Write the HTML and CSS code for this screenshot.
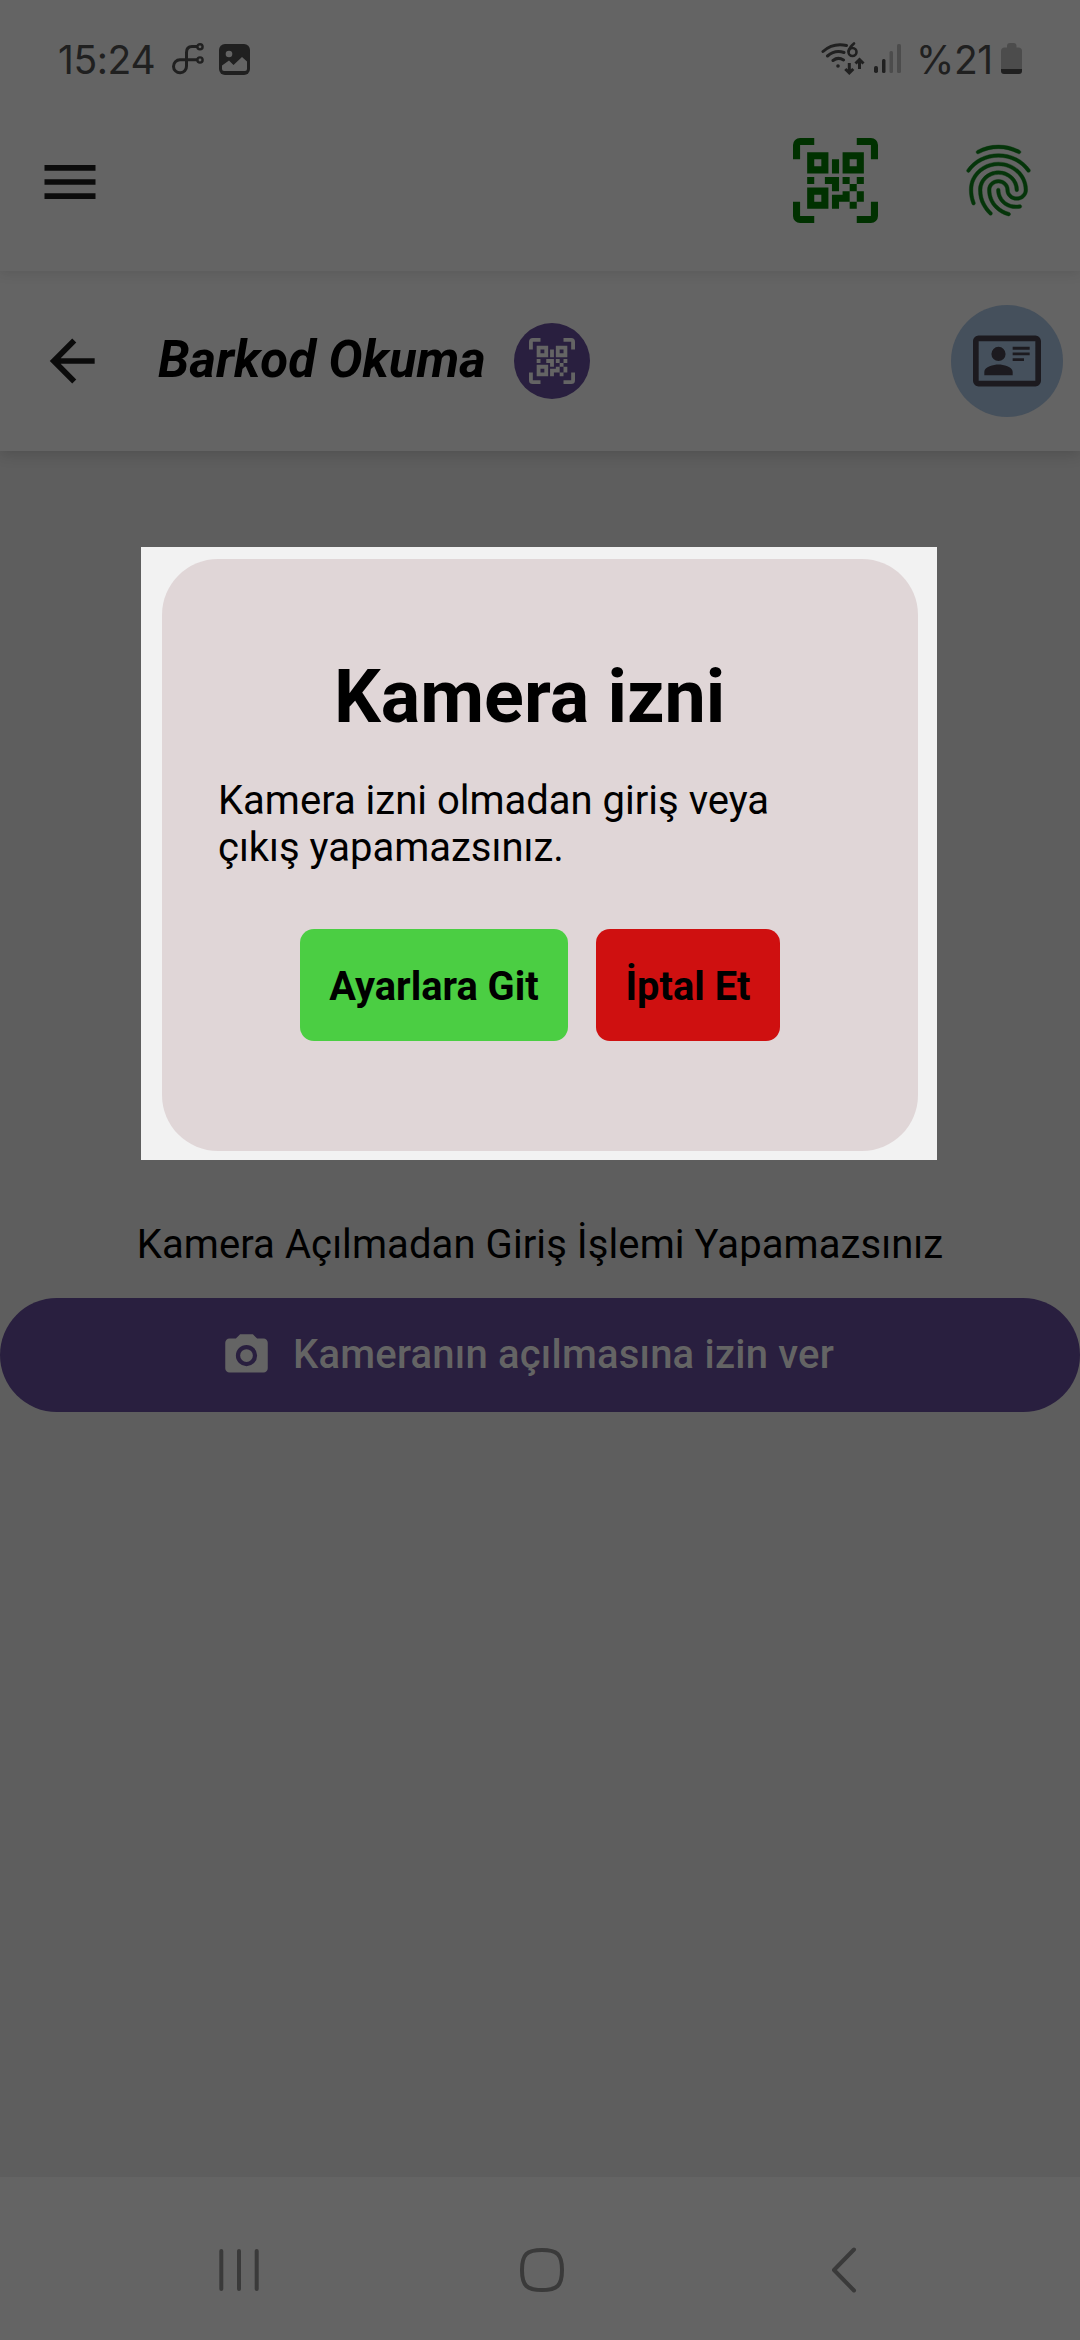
FILE: index.html
```html
<!DOCTYPE html>
<html lang="tr">
<head>
<meta charset="utf-8">
<title>Barkod Okuma</title>
<link rel="stylesheet" href="styles.css">
</head>
<body>
<svg class="defs" width="0" height="0">
  <symbol id="qr" viewBox="0 0 24 24"><path d="M4,4H10V10H4V4M20,4V10H14V4H20M14,15H16V13H14V11H16V13H18V11H20V13H18V15H20V18H18V20H16V18H13V20H11V16H14V15M16,15V18H18V15H16M4,20V14H10V20H4M6,6V8H8V6H6M16,6V8H18V6H16M6,16V18H8V16H6M4,11H6V13H4V11M9,11H13V15H11V13H9V11M11,6H13V10H11V6M2,2V6H0V2A2,2 0 0,1 2,0H6V2H2M22,0A2,2 0 0,1 24,2V6H22V2H18V0H22M2,18V22H6V24H2A2,2 0 0,1 0,22V18H2M22,22V18H24V22A2,2 0 0,1 22,24H18V22H22Z"/></symbol>
</svg>
<div class="screen">
  <header class="top">
    <div class="status">
      <span class="clock">15:24</span>
      <svg class="st-share" width="34" height="32" viewBox="0 0 34 32" fill="none" stroke="#202020" stroke-width="3"><path d="M26 3.500H21Q15.500 3.500 15.500 9.500V23A6.500 6.500 0 1 1 9 16.800H26"/><circle cx="29" cy="3.800" r="2.600" stroke-width="2.400"/><circle cx="29" cy="17" r="2.600" stroke-width="2.400"/></svg>
      <svg class="st-img" width="31" height="31" viewBox="0 0 31 31"><rect width="31" height="31" rx="6" fill="#202020"/><circle cx="10" cy="10" r="3.300" fill="#646464"/><path d="M3 21.500L10 16.500L14.500 21L23 13L28 17.500V25Q28 27 26 27H5Q3 27 3 25Z" fill="#646464"/></svg>
      <span class="spacer"></span>
      <svg class="st-wifi" width="46" height="34" viewBox="0 0 46 34" fill="none" stroke="#202020" stroke-width="3" stroke-linecap="round"><path d="M3 9.500Q13 .500 26.500 3.500M7.500 14Q15 7.500 24 10.500M13 18.500Q18 14.500 23.500 18"/><circle cx="18" cy="24" r="1.800" fill="#202020" stroke="none"/><g stroke-width="2.600"><circle cx="32.500" cy="10" r="4"/><path d="M28.700 9Q29.500 5 34 1.500"/></g><path d="M29.300 21V30M25.300 27L29.300 31L33.300 27M39.500 27V18.500M35.500 21.500L39.500 17.500L43.500 21.500" stroke-linecap="butt"/></svg>
      <svg class="st-signal" width="28" height="30" viewBox="0 0 28 30"><g fill="#202020"><rect x="0" y="22" width="4" height="7" rx="1.800"/><rect x="8" y="15" width="3.500" height="14" rx="1.500"/></g><g fill="#4c4c4c"><rect x="15.500" y="7" width="3.500" height="22" rx="1.500"/><rect x="23" y="0" width="4" height="29" rx="1.500"/></g></svg>
      <span class="percent">%21</span>
      <svg class="st-batt" width="21" height="32" viewBox="0 0 21 32"><path d="M6 3Q6 0 9 0H12.500Q15.500 0 15.500 3V4.500H18Q21 5 21 8V26H0V8Q0 5 3 4.500H6Z" fill="#4c4c4c"/><path d="M0 26H21V28Q21 31 18 31H3Q0 31 0 28Z" fill="#202020"/></svg>
    </div>
    <div class="menu-row">
      <svg class="menu" width="68" height="68" viewBox="0 0 24 24" fill="#0b0b0b"><path d="M3,6H21V8H3V6M3,11H21V13H3V11M3,16H21V18H3V16Z"/></svg>
      <svg class="qr" width="85" height="85" fill="#003100"><use href="#qr"/></svg>
      <svg class="finger" width="85" height="85" viewBox="0 0 24 24" fill="#05350a" stroke="#05350a" stroke-width=".12"><path d="M17.810,4.470C17.730,4.470 17.650,4.450 17.580,4.410C15.660,3.420 14,3 12,3C10.030,3 8.150,3.470 6.440,4.410C6.200,4.540 5.900,4.450 5.760,4.210C5.630,3.970 5.720,3.660 5.960,3.530C7.820,2.500 9.860,2 12,2C14.140,2 16,2.470 18.040,3.500C18.290,3.650 18.380,3.950 18.250,4.190C18.160,4.370 18,4.470 17.810,4.470M3.500,9.720C3.400,9.720 3.300,9.690 3.210,9.630C3,9.470 2.930,9.160 3.090,8.930C4.080,7.530 5.340,6.430 6.840,5.660C10,4.040 14,4.030 17.150,5.650C18.650,6.420 19.910,7.500 20.900,8.900C21.060,9.120 21,9.440 20.780,9.600C20.550,9.760 20.240,9.710 20.080,9.500C19.180,8.220 18.040,7.230 16.690,6.540C13.820,5.070 10.150,5.070 7.290,6.550C5.930,7.250 4.790,8.250 3.890,9.500C3.810,9.650 3.660,9.720 3.500,9.720M9.750,21.790C9.620,21.790 9.500,21.740 9.400,21.640C8.530,20.770 8.060,20.210 7.390,19C6.700,17.770 6.340,16.270 6.340,14.660C6.340,11.690 8.880,9.270 12,9.270C15.120,9.270 17.660,11.690 17.660,14.660A0.500,0.500 0 0,1 17.160,15.160A0.500,0.500 0 0,1 16.660,14.660C16.660,12.240 14.570,10.270 12,10.270C9.430,10.270 7.340,12.240 7.340,14.660C7.340,16.100 7.660,17.430 8.270,18.500C8.910,19.660 9.350,20.150 10.120,20.930C10.310,21.130 10.310,21.440 10.120,21.640C10,21.740 9.880,21.790 9.750,21.790M16.920,19.940C15.730,19.940 14.680,19.640 13.820,19.050C12.330,18.040 11.440,16.400 11.440,14.660A0.500,0.500 0 0,1 11.940,14.160A0.500,0.500 0 0,1 12.440,14.660C12.440,16.070 13.160,17.400 14.380,18.220C15.090,18.700 15.920,18.930 16.920,18.930C17.160,18.930 17.560,18.900 17.960,18.830C18.230,18.780 18.500,18.960 18.540,19.240C18.590,19.500 18.410,19.770 18.130,19.820C17.560,19.930 17.060,19.940 16.920,19.940M14.910,22C14.870,22 14.820,22 14.780,22C13.190,21.540 12.150,20.950 11.060,19.880C9.660,18.500 8.890,16.640 8.890,14.660C8.890,13.040 10.270,11.720 11.970,11.720C13.670,11.720 15.050,13.040 15.050,14.660C15.050,15.730 16,16.600 17.130,16.600C18.280,16.600 19.210,15.730 19.210,14.660C19.210,10.890 15.960,7.830 11.960,7.830C9.120,7.830 6.500,9.410 5.350,11.860C4.960,12.670 4.760,13.620 4.760,14.660C4.760,15.440 4.830,16.670 5.430,18.270C5.530,18.530 5.400,18.820 5.140,18.910C4.880,19 4.590,18.870 4.500,18.620C4,17.310 3.770,16 3.770,14.660C3.770,13.460 4,12.370 4.450,11.420C5.780,8.630 8.730,6.820 11.960,6.820C16.500,6.820 20.210,10.330 20.210,14.650C20.210,16.270 18.830,17.590 17.130,17.590C15.430,17.590 14.050,16.270 14.050,14.650C14.050,13.580 13.120,12.710 11.970,12.710C10.820,12.710 9.890,13.580 9.890,14.650C9.890,16.360 10.550,17.960 11.760,19.160C12.710,20.100 13.620,20.620 15.030,21C15.300,21.080 15.450,21.360 15.380,21.620C15.330,21.850 15.120,22 14.910,22Z"/></svg>
    </div>
  </header>
  <div class="bar">
    <svg class="back" width="68" height="68" viewBox="0 0 24 24" fill="#0b0b0b"><path d="M20,11V13H8L13.500,18.500L12.080,19.920L4.160,12L12.080,4.080L13.500,5.500L8,11H20Z"/></svg>
    <h1 class="title">Barkod Okuma</h1>
    <span class="badge"><svg width="46" height="46" fill="#646464"><use href="#qr"/></svg></span>
    <span class="card-btn"><svg width="68" height="68" viewBox="0 0 24 24" fill="#1c1a1f"><path d="M22,3H2C0.910,3.040 0.040,3.910 0,5V19C0.040,20.090 0.910,20.960 2,21H22C23.090,20.960 23.960,20.090 24,19V5C23.960,3.910 23.090,3.040 22,3M22,19H2V5H22V19M14,17V15.750C14,14.090 10.660,13.250 9,13.250C7.340,13.250 4,14.090 4,15.750V17H14M9,7A2.500,2.500 0 0,0 6.500,9.500A2.500,2.500 0 0,0 9,12A2.500,2.500 0 0,0 11.500,9.500A2.500,2.500 0 0,0 9,7M14,7V8H20V7H14M14,9V10H20V9H14M14,11V12H18V11H14"/></svg></span>
  </div>
  <main class="content">
    <p class="notice"><span>Kamera Açılmadan Giriş İşlemi Yapamazsınız</span></p>
    <div class="allow">
      <svg width="51" height="51" viewBox="0 0 24 24" fill="#646464"><path d="M4,4H7L9,2H15L17,4H20A2,2 0 0,1 22,6V18A2,2 0 0,1 20,20H4A2,2 0 0,1 2,18V6A2,2 0 0,1 4,4M12,7A5,5 0 0,0 7,12A5,5 0 0,0 12,17A5,5 0 0,0 17,12A5,5 0 0,0 12,7M12,9A3,3 0 0,1 15,12A3,3 0 0,1 12,15A3,3 0 0,1 9,12A3,3 0 0,1 12,9Z"/></svg>
      <span class="allow-text">Kameranın açılmasına izin ver</span>
    </div>
  </main>
  <nav class="nav">
    <svg width="42" height="46" viewBox="0 0 42 46" fill="none" stroke="#3a3a3a" stroke-width="4" stroke-linecap="round"><path d="M3.300 4V42M21 4V42M38.700 4V42"/></svg>
    <svg class="home" width="46" height="46" viewBox="0 0 46 46" fill="none" stroke="#3a3a3a" stroke-width="4"><path d="M23 3C38 3 43 7 43 23S38 43 23 43S3 39 3 23S8 3 23 3Z"/></svg>
    <svg width="28" height="48" viewBox="0 0 28 48" fill="none" stroke="#3a3a3a" stroke-width="4" stroke-linecap="round" stroke-linejoin="round"><path d="M24 3.500L4 24L24 44.500"/></svg>
  </nav>
  <div class="dialog">
    <div class="sheet">
      <h2 class="heading">Kamera izni</h2>
      <p class="message">Kamera izni olmadan giriş veya<br>çıkış yapamazsınız.</p>
      <div class="actions">
        <button class="btn go">Ayarlara Git</button>
        <button class="btn cancel">İptal Et</button>
      </div>
    </div>
  </div>
</div>
</body>
</html>
```
FILE: styles.css
```css
* { box-sizing: border-box; margin: 0; padding: 0; }
body { font-family: Roboto, sans-serif; color: #000; background: #5e5e5e; }
svg { display: block; flex: none; }
.defs { position: absolute; }
.screen { position: relative; width: 1080px; height: 2340px; display: flex; flex-direction: column; background: #5e5e5e; overflow: hidden; }
.top { height: 271px; background: #646464; box-shadow: 0 2px 12px rgba(0,0,0,.1); z-index: 2; flex: none; }
.status { height: 118px; display: flex; align-items: center; padding: 0 58px; font-family: Inter, sans-serif; color: #202020; }
.clock { font-size: 39px; width: 113px; letter-spacing: -.4px; }
.st-img { margin-left: 14px; }
.spacer { flex: 1; }
.st-signal { margin-left: 8px; }
.percent { font-size: 39px; width: 75px; margin-left: 14px; letter-spacing: -.4px; }
.st-batt { margin-left: 10px; }
.menu-row { display: flex; align-items: center; height: 125px; padding: 0 39px 0 36px; }
.menu { margin-top: 3px; }
.qr { margin-left: auto; }
.finger { margin-left: 78px; }
.bar { height: 180px; background: #646464; box-shadow: 0 3px 14px rgba(0,0,0,.16); z-index: 1; flex: none; display: flex; align-items: center; padding: 0 17px 0 38px; }
.title { font-size: 50.900px; font-weight: 700; font-style: italic; line-height: 60px; margin-left: 52px; width: 356px; padding-bottom: 3px; white-space: nowrap; }
.badge { width: 76px; height: 76px; border-radius: 50%; background: #291f3f; display: grid; place-items: center; }
.card-btn { width: 112px; height: 112px; border-radius: 50%; background: #45505c; display: grid; place-items: center; margin-left: auto; }
.content { flex: 1; padding-top: 771px; }
.notice { font-size: 40px; letter-spacing: .08px; line-height: 46px; height: 76px; text-align: center; white-space: nowrap; }
.allow { height: 114px; border-radius: 57px; background: #291f3f; color: #646464; display: flex; align-items: center; padding-left: 221px; gap: 21px; }
.allow-text { font-size: 40px; font-weight: 500; letter-spacing: .2px; padding-bottom: 2px; white-space: nowrap; }
.nav { height: 163px; flex: none; background: #646464; display: flex; align-items: center; justify-content: space-between; padding: 23px 222px 0 218px; }
.home { margin-right: 7px; }
.dialog { position: absolute; left: 141px; top: 547px; width: 796px; height: 613px; background: #f2f2f2; padding: 12px 19px 9px 21px; z-index: 3; }
.sheet { height: 592px; border-radius: 56px; background: #e0d6d7; padding: 95px 56px 0; }
.heading { font-size: 73.700px; line-height: 86px; font-weight: 700; padding-left: 116px; white-space: nowrap; }
.message { font-size: 40px; line-height: 47px; margin-top: 37px; white-space: nowrap; }
.actions { display: flex; gap: 28px; margin-top: 58px; padding-left: 82px; }
.btn { height: 112px; border: 0; border-radius: 14px; font: 700 39.800px/46px Roboto, sans-serif; color: #000; text-align: center; padding-top: 3px; white-space: nowrap; }
.go { width: 268px; background: #4bce43; }
.cancel { width: 184px; background: #cf1010; }
```
